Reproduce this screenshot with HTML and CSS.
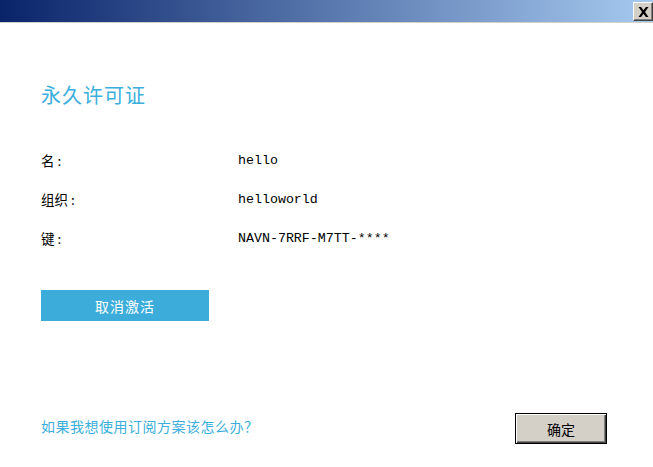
FILE: index.html
```html
<!DOCTYPE html>
<html>
<head>
<meta charset="utf-8">
<link rel="stylesheet" href="styles.css">
</head>
<body>
<div class="window">
  <div class="titlebar">
    <div class="close"><svg width="11" height="10" viewBox="0 0 11 10"><path d="M0.5 0h2.6l2.4 3.2L7.9 0h2.6L7 5l3.5 5H7.9L5.5 6.8 3.1 10H0.5L4 5z" fill="#000"/></svg></div>
  </div>
  <div class="content">
    <h1 class="title">永久许可证</h1>
    <div class="rows">
      <div class="row"><span class="label">名<span class="colon">:</span></span><span class="value">hello</span></div>
      <div class="row"><span class="label">组织<span class="colon">:</span></span><span class="value">helloworld</span></div>
      <div class="row"><span class="label">键<span class="colon">:</span></span><span class="value">NAVN-7RRF-M7TT-****</span></div>
    </div>
    <button class="deactivate">取消激活</button>
    <div class="footer">
      <a class="link">如果我想使用订阅方案该怎么办？</a>
      <button class="ok">确定</button>
    </div>
  </div>
</div>
</body>
</html>
```
FILE: styles.css
```css
html, body { margin: 0; padding: 0; background: #fff; }
body { width: 653px; height: 467px; overflow: hidden; font-family: "Noto Sans CJK SC", sans-serif; }
.window { width: 653px; height: 467px; display: flex; flex-direction: column; }
.titlebar {
  height: 22px;
  background: linear-gradient(to right, #0a246a, #a6caf0);
  border-bottom: 1px solid #d4d0c8;
  display: flex; justify-content: flex-end; align-items: flex-start;
  box-sizing: content-box;
}
.close {
  margin-top: 2px; margin-right: 0;
  width: 18px; height: 17px;
  background: #d4d0c8;
  border-top: 1px solid #fff; border-left: 1px solid #fff;
  border-right: 1px solid #404040; border-bottom: 1px solid #404040;
  box-shadow: inset -1px -1px 0 #808080;
  display: flex; align-items: center; justify-content: center;
}
.content { padding: 0 46px 0 41px; display: flex; flex-direction: column; }
.title {
  margin: 59px 0 0 0; font-weight: normal; font-size: 20px; line-height: 26px;
  color: #3aaedc; letter-spacing: 1px;
}
.rows { margin-top: 41px; display: flex; flex-direction: column; gap: 17px; }
.row { display: flex; height: 22px; align-items: center; font-size: 13.5px; color: #000; }
.label { width: 197px; }
.colon { margin-left: 3px; }
.value { font-family: "Liberation Mono", monospace; font-size: 13.3px; }
.deactivate {
  margin-top: 41px; width: 168px; height: 31px; border: none;
  background: #3cadda; color: #fff; font-family: "Noto Sans CJK SC", sans-serif;
  font-size: 14px; padding: 0; letter-spacing: 1px;
}
.footer { margin-top: 92px; display: flex; justify-content: space-between; align-items: center; }
.link { color: #3aaedc; font-size: 14px; letter-spacing: 0.5px; margin-top: -6px; }
.ok {
  width: 92px; height: 31px; padding: 0;
  background: #d4d0c8; font-family: "Noto Sans CJK SC", sans-serif; font-size: 14px; color: #000;
  border: 1px solid #000;
  box-shadow: inset 1px 1px 0 #fff, inset -1px -1px 0 #404040, inset -2px -2px 0 #808080;
}
```
